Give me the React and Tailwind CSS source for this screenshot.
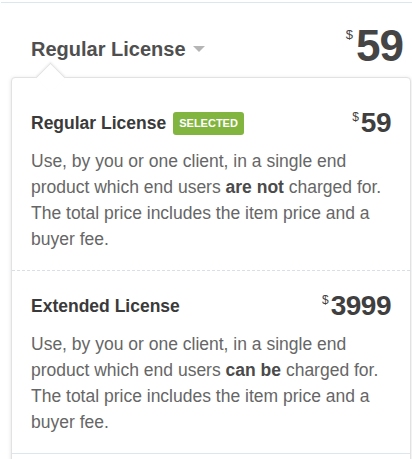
import React from 'react'

const licenses = [
  {
    name: 'Regular License',
    price: '59',
    selected: true,
    who: 'are not'
  },
  {
    name: 'Extended License',
    price: '3999',
    selected: false,
    who: 'can be'
  }
]

function Price({ value }) {
  return (
    <div className="flex items-start text-[#3f3f3f]">
      <span className="mt-[2px] mr-[2px] text-[12px] leading-[12px]">$</span>
      <span className="text-[28px] leading-[28px] font-bold tracking-[-0.5px]">
        {value}
      </span>
    </div>
  )
}

function LicenseOption({ license, first }) {
  return (
    <div
      className={
        first
          ? 'px-[19px] pt-[31px] pb-[18px] border-b border-dashed border-[#d8e0e6]'
          : 'px-[19px] pt-[21px] pb-[18px]'
      }
    >
      <div className="flex items-center justify-between h-[28px]">
        <div className="flex items-center gap-[7px]">
          <span className="text-[17.5px] leading-[28px] font-bold text-[#3a3a3a]">
            {license.name}
          </span>
          {license.selected && (
            <span className="bg-[#82b440] text-white text-[11px] font-bold leading-[23px] h-[23px] px-[6px] rounded-[3px]">
              SELECTED
            </span>
          )}
        </div>
        <Price value={license.price} />
      </div>
      <p className="mt-[11px] text-[17.5px] leading-[26px] text-[#666]">
        Use, by you or one client, in a single end product which end users{' '}
        <b className="text-[#4a4a4a]">{license.who}</b> charged for. The total
        price includes the item price and a buyer fee.
      </p>
    </div>
  )
}

export default function App() {
  return (
    <div className="w-[412px] h-[459px] overflow-hidden bg-white font-['Liberation_Sans',Arial,sans-serif]">
      <div className="mt-[2px] ml-[1px] border-t border-[#dde6ec]" />

      <div className="flex items-start justify-between h-[74px] pl-[31px] pr-[9px]">
        <div className="mt-[36px] flex items-center gap-[7px]">
          <span className="text-[20px] leading-[20px] font-bold text-[#4f4f4f]">
            Regular License
          </span>
          <span className="w-0 h-0 border-l-[6px] border-r-[6px] border-t-[6px] border-l-transparent border-r-transparent border-t-[#b5b5b5]" />
        </div>
        <div className="mt-[21px] flex items-start text-[#454545]">
          <span className="mt-[4px] mr-[3px] text-[13px] leading-[13px]">$</span>
          <span className="text-[44px] leading-[44px] font-bold tracking-[-1px]">
            59
          </span>
        </div>
      </div>

      <div className="relative ml-[11px] w-[400px] bg-white border border-[#e2e2e2] rounded-[4px] shadow-[0_1px_4px_rgba(0,0,0,0.12)]">
        <div className="absolute left-[28px] top-[-11px] w-[21px] h-[21px] rotate-45 bg-white border-t border-l border-[#e2e2e2] shadow-[-1px_-1px_2px_rgba(0,0,0,0.06)]" />
        <div className="relative">
          {licenses.map((license, i) => (
            <LicenseOption key={license.name} license={license} first={i === 0} />
          ))}
          <div className="border-t border-[#dde6ec] h-[20px]" />
        </div>
      </div>
    </div>
  )
}
